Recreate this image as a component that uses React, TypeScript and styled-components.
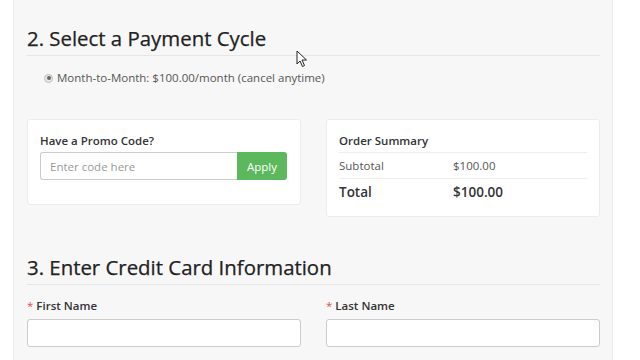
import React from 'react';
import styled, { createGlobalStyle } from 'styled-components';

const Global = createGlobalStyle`
  html, body {
    margin: 0;
    padding: 0;
    background: #ffffff;
    font-family: 'Open Sans', 'Liberation Sans', sans-serif;
    color: #333;
  }
  * { box-sizing: border-box; }
`;

const Page = styled.div`
  position: relative;
  width: 640px;
  height: 360px;
  overflow: hidden;
`;

const Panel = styled.div`
  margin-left: 13px;
  width: 600px;
  min-height: 360px;
  background: #f7f7f7;
  border-left: 1px solid #ececec;
  border-right: 1px solid #ececec;
  padding: 27px 12px 0 13px;
`;

const SectionTitle = styled.h2<{ $top: number }>`
  margin: ${(p) => p.$top}px 0 0;
  padding-bottom: 6px;
  font-size: 20.4px;
  line-height: 22px;
  font-weight: 400;
  color: #222;
  -webkit-text-stroke: 0.25px #222;
  border-bottom: 1px solid #e6e6e6;
`;

const RadioRow = styled.label`
  display: flex;
  align-items: center;
  gap: 4px;
  margin: 14px 0 0 17px;
  font-size: 11.5px;
  line-height: 16px;
  color: #555;
`;

const Radio = styled.span`
  width: 9px;
  height: 9px;
  border-radius: 50%;
  border: 1px solid #bbb;
  background: #e9e9e9;
  display: flex;
  align-items: center;
  justify-content: center;
  &::after {
    content: '';
    width: 4px;
    height: 4px;
    border-radius: 50%;
    background: #666;
  }
`;

const Cards = styled.div`
  display: grid;
  grid-template-columns: 274px 274px;
  column-gap: 25px;
  align-items: start;
  margin-top: 33px;
`;

const Card = styled.div<{ $h: number }>`
  height: ${(p) => p.$h}px;
  background: #fff;
  border: 1px solid #ececec;
  border-radius: 3px;
  padding: 13px 12px 0;
`;

const CardTitle = styled.div`
  font-size: 11.5px;
  line-height: 16px;
  font-weight: 600;
  color: #333;
  padding: 0 0 3px;
`;

const InputGroup = styled.div`
  display: flex;
  height: 28px;
`;

const CodeInput = styled.input`
  flex: 0 0 197px;
  height: 28px;
  border: 1px solid #ccc;
  border-right: none;
  border-radius: 3px 0 0 3px;
  padding: 0 9px;
  font-family: inherit;
  font-size: 11.5px;
  color: #555;
  background: #fff;
  &::placeholder { color: #999; }
`;

const ApplyButton = styled.button`
  width: 50px;
  height: 28px;
  border: none;
  border-radius: 0 3px 3px 0;
  background: #5cb85c;
  color: #fff;
  font-family: inherit;
  font-size: 11.5px;
  padding: 0;
`;

const SummaryTitle = styled(CardTitle)`
  padding-bottom: 3px;
  border-bottom: 1px solid #eee;
`;

const SummaryRow = styled.div<{ $total?: boolean }>`
  display: grid;
  grid-template-columns: 114px 1fr;
  height: 26px;
  align-items: center;
  font-size: ${(p) => (p.$total ? 13.5 : 11.5)}px;
  font-weight: ${(p) => (p.$total ? 600 : 400)};
  color: ${(p) => (p.$total ? '#333' : '#555')};
  border-bottom: ${(p) => (p.$total ? 'none' : '1px solid #eee')};
`;

const FieldRow = styled.div`
  display: grid;
  grid-template-columns: 274px 274px;
  column-gap: 25px;
  margin-top: 13px;
`;

const Field = styled.div`
  display: flex;
  flex-direction: column;
`;

const Label = styled.label`
  font-size: 11.5px;
  line-height: 16px;
  font-weight: 600;
  color: #333;
  margin-bottom: 5px;
  span { color: #d9534f; font-weight: 400; }
`;

const TextInput = styled.input`
  height: 28px;
  border: 1px solid #ccc;
  border-radius: 3px;
  background: #fff;
  font-family: inherit;
`;

const Cursor = styled.svg`
  position: absolute;
  left: 296px;
  top: 50px;
`;

export default function App() {
  return (
    <Page>
      <Global />
      <Panel>
        <SectionTitle $top={0}>2. Select a Payment Cycle</SectionTitle>
        <RadioRow>
          <Radio />
          Month-to-Month: $100.00/month (cancel anytime)
        </RadioRow>
        <Cards>
          <Card $h={86}>
            <CardTitle>Have a Promo Code?</CardTitle>
            <InputGroup>
              <CodeInput placeholder="Enter code here" />
              <ApplyButton>Apply</ApplyButton>
            </InputGroup>
          </Card>
          <Card $h={98}>
            <SummaryTitle>Order Summary</SummaryTitle>
            <SummaryRow>
              <span>Subtotal</span>
              <span>$100.00</span>
            </SummaryRow>
            <SummaryRow $total>
              <span>Total</span>
              <span>$100.00</span>
            </SummaryRow>
          </Card>
        </Cards>
        <SectionTitle $top={39}>3. Enter Credit Card Information</SectionTitle>
        <FieldRow>
          <Field>
            <Label>
              <span>*</span> First Name
            </Label>
            <TextInput />
          </Field>
          <Field>
            <Label>
              <span>*</span> Last Name
            </Label>
            <TextInput />
          </Field>
        </FieldRow>
      </Panel>
      <Cursor width="12" height="18" viewBox="0 0 12 18">
        <path d="M1 1 L1 14 L4 11 L6.5 16.5 L8.5 15.5 L6 10 L10.5 10 Z" fill="#fff" stroke="#222" strokeWidth="1" strokeLinejoin="round" />
      </Cursor>
    </Page>
  );
}
